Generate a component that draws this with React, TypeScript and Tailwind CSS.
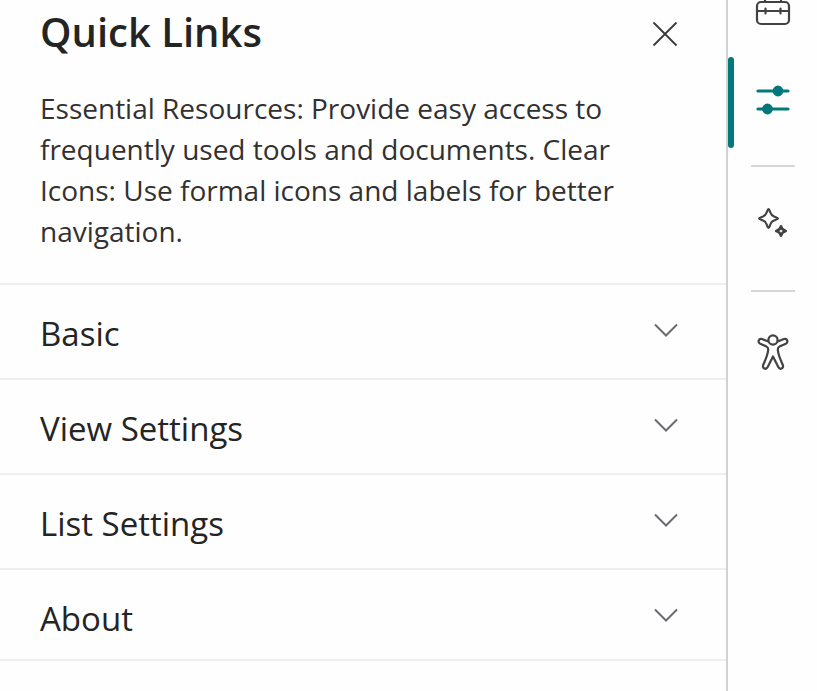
import React, { useState } from "react";

const sections = ["Basic", "View Settings", "List Settings", "About"];

function CloseIcon() {
  return (
    <svg width="26" height="26" viewBox="0 0 26 26" fill="none" stroke="#3b3a39" strokeWidth="1.8" aria-hidden="true">
      <path d="M1.5 1.5 24.5 24.5M24.5 1.5 1.5 24.5" />
    </svg>
  );
}

function ChevronIcon() {
  return (
    <svg width="24" height="14" viewBox="0 0 24 14" fill="none" stroke="#6b6b70" strokeWidth="2" aria-hidden="true">
      <path d="M1 1.5 12 12.5 23 1.5" />
    </svg>
  );
}

function ToolboxIcon() {
  return (
    <svg width="36" height="26" viewBox="0 0 36 26" fill="none" stroke="#424242" strokeWidth="2.200" strokeLinecap="round" aria-hidden="true">
      <path d="M10 0V2M26 0V2" />
      <rect x="2" y="2" width="32" height="22" rx="4" />
      <path d="M2 11H34M10.500 8.500V13.500M25.500 8.500V13.500" />
    </svg>
  );
}

function SlidersIcon() {
  return (
    <svg width="36" height="30" viewBox="0 0 36 30" fill="none" stroke="#03787c" strokeWidth="3.200" strokeLinecap="round" aria-hidden="true">
      <path d="M3 6H33M3 24H33" />
      <circle cx="23" cy="6" r="3.800" fill="#03787c" />
      <circle cx="12.500" cy="24" r="3.800" fill="#03787c" />
    </svg>
  );
}

function SparkleIcon() {
  return (
    <svg width="32" height="32" viewBox="0 0 32 32" fill="none" stroke="#424242" strokeWidth="2.200" strokeLinejoin="round" aria-hidden="true">
      <path d="M11.500 2 C12.200 2 12.600 3.500 13.300 5.500 C14.200 8.200 14.800 8.800 17.500 9.700 C19.500 10.400 21 10.800 21 11.500 C21 12.200 19.500 12.600 17.500 13.300 C14.800 14.200 14.200 14.800 13.300 17.500 C12.600 19.500 12.200 21 11.500 21 C10.800 21 10.400 19.500 9.700 17.500 C8.800 14.800 8.200 14.200 5.500 13.300 C3.500 12.600 2 12.200 2 11.500 C2 10.800 3.500 10.400 5.500 9.700 C8.200 8.800 8.800 8.200 9.700 5.500 C10.400 3.500 10.800 2 11.500 2Z" />
      <path strokeWidth="2.600" d="M24 19.200 C24.700 22.200 25.700 23.200 28.800 24 C25.700 24.800 24.700 25.800 24 28.800 C23.300 25.800 22.300 24.800 19.200 24 C22.300 23.200 23.300 22.200 24 19.200Z" />
    </svg>
  );
}

function AccessibilityIcon() {
  return (
    <svg width="32" height="36" viewBox="0 0 32 36" fill="none" stroke="#424242" strokeWidth="2.200" strokeLinejoin="round" aria-hidden="true">
      <circle cx="16" cy="6" r="4.600" />
      <path d="M11.500 7.500 L5 5 C1.700 3.900 .3 8.300 3.200 9.700 L9 12.200 C10.800 13 11.300 13.800 11.200 15.500 C11 21 8 26.500 6.200 31 C5 34.500 9 36.200 10.700 33 L16 22.500 L21.300 33 C23 36.200 27 34.500 25.800 31 C24 26.500 21 21 20.800 15.500 C20.700 13.800 21.200 13 23 12.200 L28.800 9.700 C31.700 8.300 30.300 3.900 27 5 L20.500 7.500" />
    </svg>
  );
}

function Section({ title }: { title: string }) {
  const [open, setOpen] = useState(false);
  return (
    <li className="group border-t-2 border-[#efefef]">
      <h2>
        <button
          type="button"
          aria-expanded={open}
          onClick={() => setOpen(!open)}
          className="flex w-full items-start justify-between pt-6 pr-12 pb-5 pl-10 text-left text-[33px] leading-[49px] text-[#242424] group-last:pb-4"
        >
          {title}
          <span className="pt-3.5">
            <ChevronIcon />
          </span>
        </button>
      </h2>
    </li>
  );
}

export default function App() {
  return (
    <div className="flex min-h-screen bg-[#fefefe] font-['Open_Sans','Noto_Sans',sans-serif] text-[#242424]">
      <main className="min-w-0 flex-1">
        <header className="flex items-start justify-between pr-12 pl-10">
          <h1 className="pt-1 text-[40px] leading-[56px] font-semibold">Quick Links</h1>
          <button type="button" aria-label="Close" className="pt-[21px]">
            <CloseIcon />
          </button>
        </header>
        <p className="pt-7 pr-24 pb-[31px] pl-10 text-[28px] leading-[41px] text-[#323130]">
          Essential Resources: Provide easy access to frequently used tools and documents. Clear Icons: Use formal icons and labels for better navigation.
        </p>
        <ul className="border-b-2 border-[#efefef]">
          {sections.map((title) => (
            <Section key={title} title={title} />
          ))}
        </ul>
      </main>
      <nav aria-label="Tools" className="flex w-[91px] shrink-0 flex-col items-center border-l-2 border-[#d2d2d2]">
        <button type="button" aria-label="Toolbox" className="flex h-[57px] w-full items-start justify-center">
          <ToolboxIcon />
        </button>
        <button type="button" aria-label="Quick links" aria-pressed="true" className="flex h-[91px] w-full items-center">
          <span className="h-full w-1.5 rounded-full bg-[#03787c]" />
          <span className="flex flex-1 justify-center pr-1.5 pb-1.5">
            <SlidersIcon />
          </span>
        </button>
        <hr className="mt-[17px] w-11 border-t-2 border-[#d6d6d6]" />
        <button type="button" aria-label="Suggestions" className="flex h-[123px] w-full items-center justify-center pb-3">
          <SparkleIcon />
        </button>
        <hr className="w-11 border-t-2 border-[#d6d6d6]" />
        <button type="button" aria-label="Accessibility" className="flex h-[123px] w-full items-center justify-center pb-1">
          <AccessibilityIcon />
        </button>
      </nav>
    </div>
  );
}
